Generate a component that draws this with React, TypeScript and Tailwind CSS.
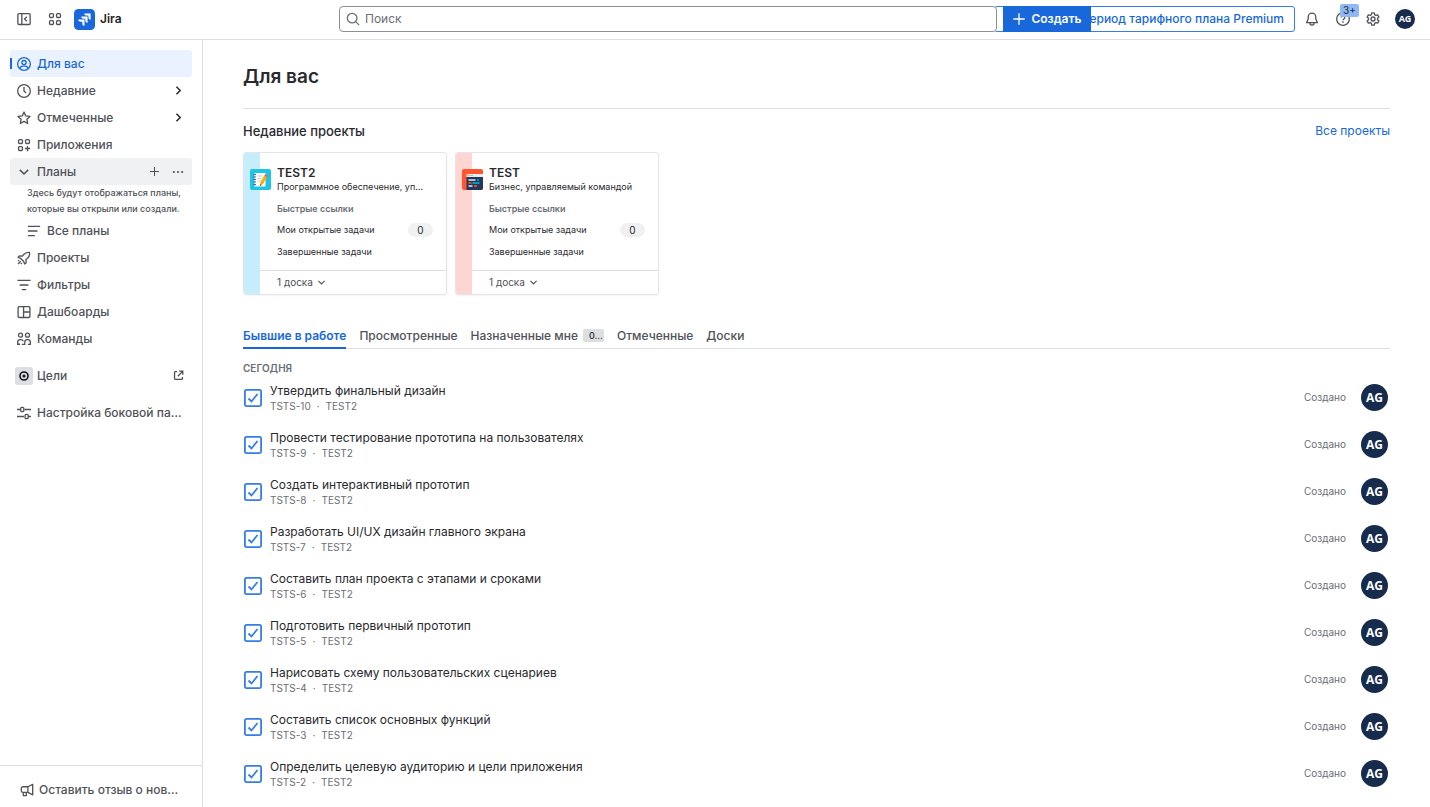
import { ReactNode } from "react";
import clsx from "clsx";

interface IconProps {
  children: ReactNode;
  size?: number;
  className?: string;
}

const Icon = ({ children, size = 14, className }: IconProps) => (
  <svg
    width={size}
    height={size}
    viewBox="0 0 16 16"
    fill="none"
    stroke="currentColor"
    strokeWidth="1.5"
    aria-hidden="true"
    className={clsx("shrink-0", className)}
  >
    {children}
  </svg>
);

const icons = {
  collapse: (
    <>
      <rect x="1" y="1.75" width="14" height="12.5" rx="1.25" />
      <path d="M5.5 2v12M11.2 5.4 8.6 8l2.6 2.6" />
    </>
  ),
  apps: (
    <>
      <rect x="1.75" y="1.75" width="4.5" height="4.5" rx="1.25" />
      <rect x="9.75" y="1.75" width="4.5" height="4.5" rx="1.25" />
      <rect x="1.75" y="9.75" width="4.5" height="4.5" rx="1.25" />
      <rect x="9.75" y="9.75" width="4.5" height="4.5" rx="1.25" />
    </>
  ),
  appsAdd: (
    <>
      <rect x="1.75" y="1.75" width="4.5" height="4.5" rx="1.25" />
      <rect x="9.75" y="1.75" width="4.5" height="4.5" rx="1.25" />
      <rect x="1.75" y="9.75" width="4.5" height="4.5" rx="1.25" />
      <path d="M12 9v6M9 12h6" />
    </>
  ),
  person: (
    <>
      <circle cx="8" cy="8" r="7.25" />
      <circle cx="8" cy="6.4" r="2.4" />
      <path d="M3.6 13.4c.3-2 1.6-3 3-3h2.8c1.4 0 2.7 1 3 3" />
    </>
  ),
  clock: (
    <>
      <circle cx="8" cy="8" r="7.25" />
      <path d="M8 3.5V8l2.4 2.2" />
    </>
  ),
  star: (
    <path
      d="m8 1.2 2 4.4 4.8.6-3.5 3.3.9 4.8L8 11.9l-4.2 2.4.9-4.8L1.2 6.2 6 5.6Z"
      strokeLinejoin="round"
    />
  ),
  chevronDown: <path d="m2.5 5.2 5.5 5.5 5.5-5.5" strokeWidth="2" />,
  chevronRight: <path d="m5 2.5 5.5 5.5L5 13.5" strokeWidth="2.2" />,
  plus: <path d="M8 1.5v13M1.5 8h13" />,
  more: (
    <g fill="currentColor" stroke="none">
      <circle cx="2.5" cy="8" r="1.4" />
      <circle cx="8" cy="8" r="1.4" />
      <circle cx="13.5" cy="8" r="1.4" />
    </g>
  ),
  lines: <path d="M1 2.75h14M1 8h11M1 13.25h8" />,
  rocket: (
    <path
      d="M14.3 1.7c-3-.4-5.2.5-6.9 2.6L6.2 5.8 2.6 5.5 1.2 7.2l3 1.3 3.3 3.3 1.3 3 1.7-1.4-.3-3.6 1.5-1.2c2.1-1.7 3-3.9 2.6-6.9ZM10.2 5.8h.1M1.2 14.8l3-3M1.2 11.6l1.1-1.1M4.4 14.8l1.1-1.1"
      strokeLinejoin="round"
    />
  ),
  filter: <path d="M0.5 2.75h15M3 8h10M5.5 13.25h5" />,
  dashboard: (
    <>
      <rect x="1.25" y="1.75" width="13.5" height="12.5" rx="1.25" />
      <path d="M7.5 2v12M7.5 8h7" />
    </>
  ),
  teams: (
    <>
      <circle cx="4" cy="3.6" r="2.3" />
      <circle cx="12" cy="3.6" r="2.3" />
      <path d="M3.5 14H.8v-2.5c0-1.6 1.2-2.7 2.8-2.7h.8c1.3 0 2.4.8 2.7 2M5.5 14.2h4.2M8.9 14v-2.5c0-1.6 1.2-2.7 2.8-2.7h.8c1.6 0 2.7 1.1 2.7 2.7v2.7h-2.7" />
    </>
  ),
  external: (
    <path
      d="M6 2.25H3.5c-.7 0-1.25.55-1.25 1.25v9c0 .7.55 1.25 1.25 1.25h9c.7 0 1.25-.55 1.25-1.25V10M9 1.75h5.25V7M14 2 7 9"
      strokeWidth="1.9"
    />
  ),
  sliders: (
    <>
      <path d="M0 4h4M8.5 4H16M0 12h8M12.5 12H16" />
      <rect x="4.25" y="1.5" width="3.5" height="5" rx="1" />
      <rect x="9.25" y="9.5" width="3.5" height="5" rx="1" />
    </>
  ),
  megaphone: (
    <path
      d="M14.5 1.5v12L9 10.75H3.5a2 2 0 0 1-2-2v-2.5a2 2 0 0 1 2-2H9ZM9 4.25v6.5M3.8 11v3.5h3.4V11"
      strokeLinejoin="round"
    />
  ),
  search: (
    <>
      <circle cx="7" cy="7" r="5.5" />
      <path d="m11 11 4 4" />
    </>
  ),
  bell: (
    <path
      d="M8 1.2a4.3 4.3 0 0 0-4.3 4.3v2.3L1.8 12.2h12.4l-1.9-4.4V5.5A4.3 4.3 0 0 0 8 1.2ZM5.6 12.5a2.4 2.4 0 0 0 4.8 0"
      strokeLinejoin="round"
    />
  ),
  help: (
    <>
      <circle cx="8" cy="8" r="7.25" />
      <path d="M5.9 6.3A2.1 2.1 0 1 1 8.8 8.2c-.6.3-.8.6-.8 1.3M8 10.7v1.5" />
    </>
  ),
  gear: (
    <>
      <path
        d="m6.6 1-.5 2.1-1.3.8-2.1-.6-1.4 2.4L2.8 7.2v1.6l-1.5 1.5 1.4 2.4 2.1-.6 1.3.8.5 2.1h2.8l.5-2.1 1.3-.8 2.1.6 1.4-2.4-1.5-1.5V7.2l1.5-1.5-1.4-2.4-2.1.6-1.3-.8L9.4 1Z"
        strokeLinejoin="round"
      />
      <circle cx="8" cy="8" r="2.3" />
    </>
  ),
};

const JiraLogo = () => (
  <svg width="21" height="21" viewBox="0 0 24 24" aria-hidden="true">
    <rect width="24" height="24" rx="5" fill="#1868db" />
    <g fill="#fff">
      <path d="M11.8 5H19v7.2c-1.6 0-2.5-1.1-2.5-2.7v-2h-2c-1.7 0-2.7-1-2.7-2.5Z" />
      <path d="M8.3 8.5h7.2v7.2c-1.6 0-2.5-1.1-2.5-2.7v-2h-2c-1.7 0-2.7-1-2.7-2.5Z" />
      <path d="M4.8 12H12v7.2c-1.6 0-2.5-1.1-2.5-2.7v-2h-2c-1.7 0-2.7-1-2.7-2.5Z" />
    </g>
  </svg>
);

const NotepadLogo = () => (
  <svg width="21" height="21" viewBox="0 0 21 21" aria-hidden="true">
    <rect width="21" height="21" rx="2" fill="#1fc3e8" />
    <path d="M4.5 4h11v13.5h-11z" fill="#fff" />
    <path
      d="M3.5 5.5h2.5M3.5 8h2.5M3.5 10.5h2.5M3.5 13h2.5M3.5 15.5h2.5"
      stroke="#42526e"
      strokeWidth=".9"
    />
    <path d="M7.5 7h5M7.5 9.5h4M7.5 12h3" stroke="#c1c7d0" />
    <path d="m10.3 13.5 4-7 2.7 1.5-4 7-2.9 2Z" fill="#ffab00" />
    <path d="m14.3 6.5.8-1.3 2.7 1.5-.8 1.3Z" fill="#ff5630" />
    <path d="m10.2 15.3-.1 1.7 1.4-.9Z" fill="#344563" />
  </svg>
);

const CodeLogo = () => (
  <svg width="21" height="21" viewBox="0 0 21 21" aria-hidden="true">
    <rect width="21" height="21" rx="2" fill="#ff5630" />
    <path d="M4.5 5H21v3H4.5z" fill="#ebecf0" />
    <path d="M5.5 6.5h1" stroke="#ff5630" />
    <path d="M7.5 6.5h1" stroke="#ffab00" />
    <path d="M9.5 6.5h1" stroke="#00b8d9" />
    <path d="M4.5 8H21v11a2 2 0 0 1-2 2H4.5z" fill="#253858" />
    <path d="M6.5 11h7M6.5 17h4" stroke="#deebff" strokeWidth="1.3" />
    <path d="M15 11h2M10.5 14h7" stroke="#00b8d9" strokeWidth="1.3" />
    <path d="M6.5 14h3M12 17h3" stroke="#ff5630" strokeWidth="1.3" />
  </svg>
);

interface NavItemProps {
  icon: ReactNode;
  label: string;
  active?: boolean;
  hovered?: boolean;
  nested?: boolean;
  className?: string;
  children?: ReactNode;
}

const NavItem = ({
  icon,
  label,
  active,
  hovered,
  nested,
  className,
  children,
}: NavItemProps) => (
  <li
    className={clsx(
      "relative flex h-[27px] items-center rounded-[3px] pr-2",
      nested ? "pl-[17px]" : "pl-[7px]",
      active && "bg-[#e9f2fe] text-[#1868db]",
      hovered && "bg-[#f0f1f2]",
      className,
    )}
  >
    {active && (
      <span className="absolute left-0 top-2 h-[11px] w-0.5 bg-[#1868db]" />
    )}
    <a href="#" className="flex min-w-0 flex-1 items-center gap-[6px]">
      {icon}
      <span className="truncate">{label}</span>
    </a>
    {children}
  </li>
);

const Sidebar = () => (
  <aside className="flex w-[203px] shrink-0 flex-col border-r border-[#dddee1] text-xs font-medium text-[#505258]">
    <nav className="flex-1 px-[10px] pt-[10px]">
      <ul>
        <NavItem icon={<Icon>{icons.person}</Icon>} label="Для вас" active />
        <NavItem icon={<Icon>{icons.clock}</Icon>} label="Недавние">
          <Icon size={11} className="text-[#292a2e]">
            {icons.chevronRight}
          </Icon>
        </NavItem>
        <NavItem icon={<Icon>{icons.star}</Icon>} label="Отмеченные">
          <Icon size={11} className="text-[#292a2e]">
            {icons.chevronRight}
          </Icon>
        </NavItem>
        <NavItem icon={<Icon>{icons.appsAdd}</Icon>} label="Приложения" />
        <NavItem
          icon={
            <Icon size={12} className="mx-px">
              {icons.chevronDown}
            </Icon>
          }
          label="Планы"
          hovered
        >
          <button type="button" aria-label="Создать план" className="mr-3">
            <Icon size={11}>{icons.plus}</Icon>
          </button>
          <button type="button" aria-label="Ещё">
            <Icon size={12}>{icons.more}</Icon>
          </button>
        </NavItem>
      </ul>
      <p className="whitespace-nowrap pl-[17px] text-[9px] leading-4">
        Здесь будут отображаться планы,
        <br />
        которые вы открыли или создали.
      </p>
      <ul>
        <NavItem icon={<Icon>{icons.lines}</Icon>} label="Все планы" nested />
        <NavItem icon={<Icon>{icons.rocket}</Icon>} label="Проекты" />
        <NavItem icon={<Icon>{icons.filter}</Icon>} label="Фильтры" />
        <NavItem icon={<Icon>{icons.dashboard}</Icon>} label="Дашбоарды" />
        <NavItem icon={<Icon>{icons.teams}</Icon>} label="Команды" />
        <NavItem
          icon={
            <span className="-mx-[2px] flex size-[18px] shrink-0 items-center justify-center rounded-[3px] bg-[#dddee1]">
              <svg width="10" height="10" viewBox="0 0 10 10" aria-hidden="true">
                <circle
                  cx="5"
                  cy="5"
                  r="4"
                  fill="none"
                  stroke="#101214"
                  strokeWidth="1.6"
                />
                <circle cx="5" cy="5" r="1.6" fill="#101214" />
              </svg>
            </span>
          }
          label="Цели"
          className="mt-[10px]"
        >
          <Icon size={11}>{icons.external}</Icon>
        </NavItem>
        <NavItem
          icon={<Icon>{icons.sliders}</Icon>}
          label="Настройка боковой панели"
          className="mt-[10px]"
        />
      </ul>
    </nav>
    <div className="border-t border-[#dddee1] px-5 pb-2 pt-[15px]">
      <button
        type="button"
        className="flex w-full items-center gap-[5px] text-left leading-[18px]"
      >
        <Icon>{icons.megaphone}</Icon>
        <span className="truncate">Оставить отзыв о новой навигации</span>
      </button>
    </div>
  </aside>
);

const Header = () => (
  <header className="flex h-10 shrink-0 items-center border-b border-[#dddee1] pb-px pl-[17px] pr-[15px] text-[#505258]">
    <button type="button" aria-label="Свернуть боковую панель">
      <Icon>{icons.collapse}</Icon>
    </button>
    <button type="button" aria-label="Приложения" className="ml-[17px]">
      <Icon>{icons.apps}</Icon>
    </button>
    <a
      href="#"
      className="flex w-[277px] items-center gap-[5px] pl-3 text-xs font-semibold text-[#1e1f21]"
    >
      <JiraLogo />
      Jira
    </a>
    <label className="relative z-10 flex h-[26px] flex-1 items-center gap-[5px] rounded-[4px] border border-[#8c8f97] bg-white px-[6px] text-[#6b6e76]">
      <Icon>{icons.search}</Icon>
      <input
        type="search"
        placeholder="Поиск"
        aria-label="Поиск"
        className="min-w-0 flex-1 text-xs outline-none placeholder:text-[#6b6e76]"
      />
    </label>
    <div className="relative -ml-[3px] flex w-[301px] shrink-0">
      <button
        type="button"
        className="h-[26px] flex-1 whitespace-nowrap rounded-[3px] border border-[#357de8] pr-[10px] text-right text-xs font-medium text-[#1868db]"
      >
        Период тарифного плана Premium
      </button>
      <button
        type="button"
        className="absolute left-[9px] top-0 flex h-[26px] w-[88px] items-center justify-center gap-[5px] bg-[#1868db] text-xs font-semibold text-white"
      >
        <Icon>{icons.plus}</Icon>
        Создать
      </button>
    </div>
    <button type="button" aria-label="Уведомления" className="ml-[10px]">
      <Icon>{icons.bell}</Icon>
    </button>
    <button type="button" aria-label="Справка" className="relative ml-[17px]">
      <Icon>{icons.help}</Icon>
      <span className="absolute -top-2 left-1 flex h-[13px] w-[19px] items-center justify-center rounded-[2px] bg-[#8fb8f6] text-[10px] text-[#292a2e]">
        3+
      </span>
    </button>
    <button type="button" aria-label="Настройки" className="ml-4">
      <Icon>{icons.gear}</Icon>
    </button>
    <button
      type="button"
      className="ml-[15px] flex size-5 items-center justify-center rounded-full bg-[#172b4d] font-['Open_Sans',sans-serif] text-[9px] font-bold text-white"
    >
      AG
    </button>
  </header>
);

const projects = [
  {
    name: "TEST2",
    type: "Программное обеспечение, управляемое командой",
    stripe: "bg-[#c6edfb]",
    logo: <NotepadLogo />,
  },
  {
    name: "TEST",
    type: "Бизнес, управляемый командой",
    stripe: "bg-[#ffd5d2]",
    logo: <CodeLogo />,
  },
];

const ProjectCard = ({ name, type, stripe, logo }: (typeof projects)[0]) => (
  <article className="flex w-[204px] overflow-hidden rounded-[3px] border border-[#e4e5e8] text-[10px] text-[#292a2e] shadow-xs">
    <div className={clsx("w-4 shrink-0 pl-[6px] pt-4", stripe)}>
      <div className="relative w-[21px]">{logo}</div>
    </div>
    <div className="min-w-0 flex-1">
      <div className="pb-[11px] pl-[17px] pr-[13px] pt-3">
        <h3 className="text-xs font-semibold leading-4">{name}</h3>
        <p className="mr-2 truncate text-[9px] leading-3">{type}</p>
        <p className="mt-[10px] text-[9px] font-semibold leading-3 text-[#6b6e76]">
          Быстрые ссылки
        </p>
        <a
          href="#"
          className="mt-2 flex items-center justify-between text-[9px] leading-[14px]"
        >
          Мои открытые задачи
          <span className="w-[25px] rounded-full bg-[#f0f1f2] text-center text-[10px] leading-[14px]">
            0
          </span>
        </a>
        <a href="#" className="mt-2 block text-[9px] leading-[14px]">
          Завершенные задачи
        </a>
      </div>
      <div className="border-t border-[#dddee1] pl-[17px]">
        <button
          type="button"
          className="flex h-[23px] items-center gap-1 text-[#505258]"
        >
          1 доска
          <Icon size={9}>{icons.chevronDown}</Icon>
        </button>
      </div>
    </div>
  </article>
);

const tabs = [
  { label: "Бывшие в работе", active: true },
  { label: "Просмотренные" },
  { label: "Назначенные мне", count: "0…" },
  { label: "Отмеченные" },
  { label: "Доски" },
];

const issues = [
  { id: "TSTS-10", title: "Утвердить финальный дизайн" },
  { id: "TSTS-9", title: "Провести тестирование прототипа на пользователях" },
  { id: "TSTS-8", title: "Создать интерактивный прототип" },
  { id: "TSTS-7", title: "Разработать UI/UX дизайн главного экрана" },
  { id: "TSTS-6", title: "Составить план проекта с этапами и сроками" },
  { id: "TSTS-5", title: "Подготовить первичный прототип" },
  { id: "TSTS-4", title: "Нарисовать схему пользовательских сценариев" },
  { id: "TSTS-3", title: "Составить список основных функций" },
  { id: "TSTS-2", title: "Определить целевую аудиторию и цели приложения" },
];

const IssueRow = ({ id, title }: (typeof issues)[0]) => (
  <li className="flex h-[47px] items-center">
    <svg
      width="20"
      height="20"
      viewBox="0 0 20 20"
      fill="none"
      stroke="#357de8"
      strokeWidth="1.8"
      aria-hidden="true"
      className="shrink-0"
    >
      <rect x="1.9" y="1.9" width="16.2" height="16.2" rx="1.5" />
      <path d="m5.5 10.5 3 3 6-7.5" />
    </svg>
    <a href="#" className="ml-[7px] min-w-0 flex-1">
      <span className="block truncate text-xs leading-4 text-[#292a2e]">
        {title}
      </span>
      <span className="flex gap-[6px] text-[10px] leading-[14px] text-[#6b6e76]">
        <span>{id}</span>
        <span>·</span>
        <span>TEST2</span>
      </span>
    </a>
    <span className="text-[10px] text-[#6b6e76]">Создано</span>
    <span className="ml-[15px] mr-[2px] flex size-[27px] items-center justify-center rounded-full bg-[#172b4d] font-['Open_Sans',sans-serif] text-xs font-bold text-white">
      AG
    </span>
  </li>
);

export default function App() {
  return (
    <div className="flex h-screen flex-col overflow-hidden bg-white font-['Inter','Liberation_Sans',sans-serif]">
      <Header />
      <div className="flex min-h-0 flex-1">
        <Sidebar />
        <main className="min-w-0 flex-1 overflow-hidden px-10 text-[#292a2e]">
          <h1 className="border-b border-[#dddee1] pb-[17px] pt-[23px] text-[19px] font-semibold leading-7">
            Для вас
          </h1>
          <div className="mt-3 flex items-center justify-between leading-5">
            <h2 className="text-[13px] font-medium">Недавние проекты</h2>
            <a href="#" className="text-xs text-[#1868db]">
              Все проекты
            </a>
          </div>
          <div className="mt-[11px] flex gap-2">
            {projects.map((project) => (
              <ProjectCard key={project.name} {...project} />
            ))}
          </div>
          <div
            role="tablist"
            className="mt-[29px] flex gap-[13px] border-b border-[#dddee1] text-xs font-medium text-[#505258]"
          >
            {tabs.map(({ label, active, count }) => (
              <button
                key={label}
                type="button"
                role="tab"
                aria-selected={Boolean(active)}
                className={clsx(
                  "-mb-px flex h-[25px] items-center gap-[5px] border-b-2",
                  active
                    ? "border-[#1868db] font-semibold text-[#1868db]"
                    : "border-transparent",
                )}
              >
                {label}
                {count && (
                  <span className="w-[21px] rounded-[2px] bg-[#dddee1] pl-[6px] text-left text-[9px] leading-[13px] text-[#292a2e]">
                    {count}
                  </span>
                )}
              </button>
            ))}
          </div>
          <h3 className="mt-[11px] text-[10px] font-semibold leading-4 text-[#6b6e76]">
            СЕГОДНЯ
          </h3>
          <ul className="-mt-[2px]">
            {issues.map((issue) => (
              <IssueRow key={issue.id} {...issue} />
            ))}
          </ul>
        </main>
      </div>
    </div>
  );
}
